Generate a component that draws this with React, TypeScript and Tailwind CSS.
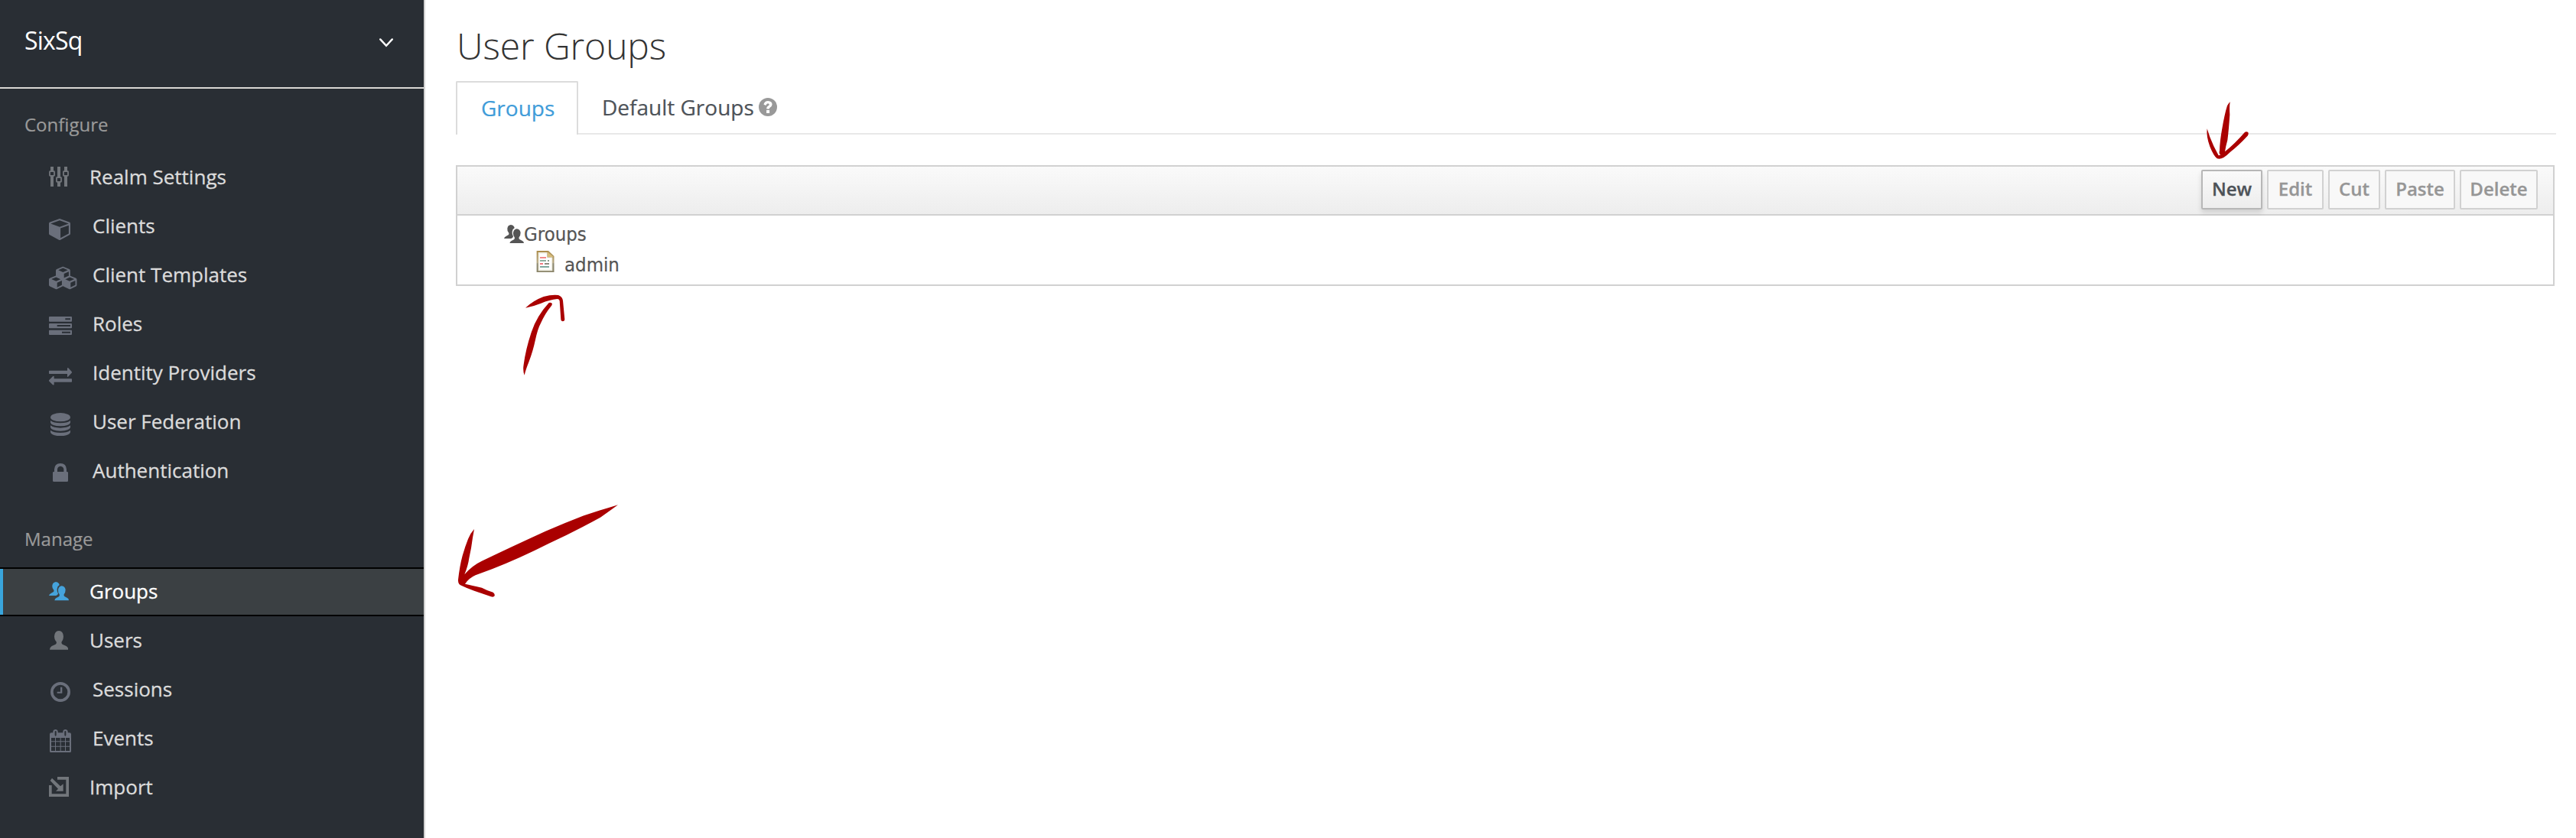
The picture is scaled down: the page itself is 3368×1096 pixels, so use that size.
import type { ReactNode } from "react";

const GRAY = "#72767b";
const SLATE = "#6a6f7b";

type IconProps = { box: string; w: number; h: number; color: string; children: ReactNode; className?: string };

function Glyph({ box, w, h, color, children, className = "" }: IconProps) {
  return (
    <svg viewBox={box} width={w} height={h} fill={color} stroke="none" className={"block shrink-0 " + className}>
      {children}
    </svg>
  );
}

const CUBE =
  "M896 1629l640-349v-636l-640 233v752zm-64-865l698-254-698-254-698 254zm832-252v768q0 35-18 65t-49 47l-704 384q-28 16-61 16t-61-16l-704-384q-31-17-49-47t-18-65v-768q0-40 23-73t61-47l704-256q22-8 44-8t44 8l704 256q38 14 61 47t23 73z";

const SlidersIcon = () => (
  <Glyph box="0 0 26 26" w={26} h={26} color={GRAY} className="mt-[18px]">
    {[
      [4, 6],
      [13, 14],
      [22, 6],
    ].map(([x, y]) => (
      <g key={x}>
        <rect x={x - 2} y="0" width="4" height={y} />
        <rect x={x - 2} y={y + 6} width="4" height={20 - y} />
        <rect x={x - 3} y={y + 0.2} width="6" height="5.6" rx="0.5" fill="none" stroke={GRAY} strokeWidth="1.8" />
      </g>
    ))}
  </Glyph>
);

const CubeIcon = () => (
  <Glyph box="0 128 1664 1664" w={28} h={28} color={SLATE} className="mt-[22px]">
    <path d={CUBE} />
  </Glyph>
);

const SmallCube = ({ x, y }: { x: number; y: number }) => (
  <g transform={`translate(${x} ${y})`}>
    <path
      fillRule="evenodd"
      d="M9.6 0.3L17.6 3.6Q18.8 4.2 18.8 5.4V12.6Q18.8 13.8 17.8 14.3L10.6 17.9Q9.6 18.3 8.6 17.9L1.2 14.3Q0 13.8 0 12.6V5.4Q0 4.2 1.2 3.6L9 0.3Q9.4 0.1 9.6 0.3ZM9.4 2.2L3.2 4.9L9.4 7.6L15.6 4.9ZM10.7 9.6V15.6L16.9 12.5V6.9Z"
    />
  </g>
);

const CubesIcon = () => (
  <Glyph box="0 0 37 31" w={37} h={31} color={SLATE} className="mt-[20px]">
    <SmallCube x={9} y={0.4} />
    <SmallCube x={0} y={12.2} />
    <SmallCube x={17.6} y={12.2} />
  </Glyph>
);

const TasksIcon = () => (
  <Glyph box="0 0 90 72" w={30} h={24} color={SLATE} className="mt-[22px]">
    <path
      fillRule="evenodd"
      d="M3 0H87Q90 0 90 3V17Q90 20 87 20H3Q0 20 0 17V3Q0 0 3 0ZM64 7V13H84V7ZM3 27H87Q90 27 90 30V43Q90 46 87 46H3Q0 46 0 43V30Q0 27 3 27ZM32 33V39H84V33ZM3 53H87Q90 53 90 56V69Q90 72 87 72H3Q0 72 0 69V56Q0 53 3 53ZM51 59V65H84V59Z"
    />
  </Glyph>
);

const ExchangeIcon = () => (
  <Glyph box="0 0 90 68" w={30} h={22.67} color={SLATE} className="mt-[25px]">
    <path d="M0 13Q0 11 2 11H72V2Q73 -1 76 1L89 15Q91 18 89 20L75 35Q72 37 72 33V24H2Q0 24 0 22Z" />
    <path d="M90 46Q90 43 88 43H20V34Q18 31 15 34L1 48Q-1 50 1 53L15 67Q19 69 20 65V56H88Q90 56 90 54Z" />
  </Glyph>
);

const DatabaseIcon = () => (
  <Glyph box="0 0 78 91" w={26} h={30.33} color={SLATE} className="ml-[2px] mt-[20px]">
    <ellipse cx="39" cy="17" rx="39" ry="17" />
    <path d="M0 30Q12 40 39 40T78 30V38Q74 51 39 52Q4 51 0 38Z" />
    <path d="M0 49Q12 59 39 59T78 49V57Q74 70 39 71Q4 70 0 57Z" />
    <path d="M0 68Q12 78 39 78T78 68V76Q74 90 39 91Q4 90 0 76Z" />
  </Glyph>
);

const LockIcon = () => (
  <Glyph box="0 0 60 72" w={20} h={24} color={SLATE} className="ml-[5px] mt-[22px]">
    <path
      fillRule="evenodd"
      d="M6 33V23Q7 1 30 0Q53 1 54 23V33H56Q60 33 60 37V68Q60 72 56 72H4Q0 72 0 68V37Q0 33 4 33ZM18 33H43V23Q42 12 30 11Q19 12 18 23Z"
    />
  </Glyph>
);

const USER = "M36 0Q53 1 54 22Q53 37 47 43Q45 50 50 53L65 60Q73 65 73 74H0Q0 65 8 60L23 53Q28 50 26 43Q19 37 18 22Q19 1 36 0Z";

const GroupIcon = ({ color }: { color: string }) => (
  <Glyph box="0 0 78 74" w={26} h={24.67} color={color}>
    <path d="M27 0Q36 0 40 8L41 13Q33 17 32 27Q31 38 36 46Q36 51 28 54H0Q1 48 9 44L18 39Q21 36 18 31Q12 25 13 14Q15 1 27 0Z" />
    <path d="M50 16Q63 17 65 31Q65 42 59 49Q57 55 62 58L72 63Q78 66 78 73H22Q23 66 29 63L39 58Q43 55 41 49Q35 42 36 31Q38 17 50 16Z" />
  </Glyph>
);

const UserIcon = () => (
  <Glyph box="0 0 73 74" w={24.3} h={24.67} color={GRAY} className="ml-px mt-[19px]">
    <path d={USER} />
  </Glyph>
);

const ClockIcon = () => (
  <Glyph box="0 0 78 78" w={26} h={26} color={SLATE} className="ml-[2px] mt-[22px]">
    <circle cx="39" cy="39" r="33.5" fill="none" stroke={SLATE} strokeWidth="11" />
    <path d="M39 20H46V44H26V38H39Z" />
  </Glyph>
);

const CalendarIcon = () => (
  <Glyph box="0 0 84 91" w={28} h={30.33} color={SLATE} className="ml-px mt-[20px]">
    <path
      fillRule="evenodd"
      d="M6 13H13V8Q14 0 23 0Q31 0 32 8V13H52V8Q53 0 61 0Q70 0 71 8V13H78Q84 13 84 19V85Q84 91 78 91H6Q0 91 0 85V19Q0 13 6 13ZM20 8V22Q20 26 23 26T26 22V8Q26 6 23 6T20 8ZM58 8V22Q58 26 61 26T64 22V8Q64 6 61 6T58 8ZM6 33V46H21V33ZM24 33V46H41V33ZM44 33V46H60V33ZM63 33V46H78V33ZM6 49V65H21V49ZM24 49V65H41V49ZM44 49V65H60V49ZM63 49V65H78V49ZM6 68V84H21V68ZM24 68V84H41V68ZM44 68V84H60V68ZM63 68V84H78V68Z"
    />
  </Glyph>
);

const ImportIcon = () => (
  <Glyph box="0 0 78 78" w={26} h={26} color={GRAY} className="mt-[18px]">
    <path d="M33 0H78V78H0V33H11V67H67V11H33Z" />
    <path d="M12 5L45 37L56 28V56H27L36 47L5 15Z" />
  </Glyph>
);

const DocIcon = () => (
  <svg viewBox="0 0 24 28" width={24} height={28} className="-mt-2 block shrink-0">
    <defs>
      <linearGradient id="doc" x1="0" y1="0" x2="0" y2="1">
        <stop offset="0" stopColor="#ac8c4a" />
        <stop offset="0.55" stopColor="#b5a680" />
        <stop offset="0.6" stopColor="#8e8b74" />
        <stop offset="1" stopColor="#8a8468" />
      </linearGradient>
    </defs>
    <path d="M0.6 0H16L23.5 7V28H0.6Z" fill="url(#doc)" />
    <path d="M2.7 2H14.5V8.5H21.3V26.2H2.7Z" fill="#f0eee2" />
    <path d="M4.4 3.8H14V9.5H19.8V24.6H4.4Z" fill="#fff" />
    <path d="M15 1.5V8H22.5Z" fill="#d8bd7c" />
    <rect x="5" y="8" width="8" height="2" fill="#f28b8b" />
    <rect x="5" y="12" width="8" height="2" fill="#8fb0a0" />
    <rect x="15" y="12" width="2" height="2" fill="#8a9a8a" />
    <rect x="5" y="16" width="4" height="2" fill="#f07a80" />
    <rect x="11" y="16" width="6" height="2" fill="#8c8c80" />
    <rect x="5" y="20" width="12" height="2" fill="#7fa79d" />
  </svg>
);

function NavItem({ icon, label, wide }: { icon: ReactNode; label: string; wide?: boolean }) {
  return (
    <li className="flex h-16 items-start pl-16 text-[26px] leading-[62px] text-[#dbdbdb] [-webkit-text-stroke:0.3px]">
      <span className={wide ? "w-[57px]" : "w-[53px]"}>{icon}</span>
      {label}
    </li>
  );
}

function ToolButton({ label, width, active }: { label: string; width: string; active?: boolean }) {
  return (
    <button
      className={
        "flex h-[52px] items-center justify-center rounded-[2px] border-2 pb-[3px] text-[24px] leading-none font-semibold [-webkit-text-stroke:0.3px] " +
        width +
        (active
          ? " border-[#b7b7b7] bg-linear-to-b from-[#fafafa] to-[#ededed] text-[#4d5258] shadow-[0_4px_6px_rgba(3,3,3,0.13)]"
          : " border-[#d1d1d1] bg-[#f8f8f8] text-[#969696]")
      }
    >
      {label}
    </button>
  );
}

export default function App() {
  return (
    <div className="relative flex h-[1096px] w-[3368px] overflow-hidden bg-white font-['Open_Sans',sans-serif]">
      <aside className="w-[556px] shrink-0 border-r-2 border-[#d1d1d1] bg-[#292e34]">
        <div className="flex h-[116px] items-center justify-between border-b-2 border-[#d9d7d4] pr-10 pb-2 pl-8 text-[32px] text-white">
          <span className="tracking-[-0.8px]">SixSq</span>
          <svg width="18" height="12" viewBox="0 0 18 12" fill="none" stroke="#fff" strokeWidth="2.4" strokeLinecap="round" className="mt-[5px]">
            <path d="M1.2 1.4L9 9.8L16.8 1.4" />
          </svg>
        </div>
        <h2 className="flex h-[84px] items-center pt-[9px] pl-8 text-[24px] text-[#9a9a9a] [-webkit-text-stroke:0.2px]">Configure</h2>
        <ul>
          <NavItem icon={<SlidersIcon />} label="Realm Settings" />
          <NavItem icon={<CubeIcon />} label="Clients" wide />
          <NavItem icon={<CubesIcon />} label="Client Templates" wide />
          <NavItem icon={<TasksIcon />} label="Roles" wide />
          <NavItem icon={<ExchangeIcon />} label="Identity Providers" wide />
          <NavItem icon={<DatabaseIcon />} label="User Federation" wide />
          <NavItem icon={<LockIcon />} label="Authentication" wide />
        </ul>
        <h2 className="flex h-[94px] items-center pt-[19px] pl-8 text-[24px] text-[#9a9a9a] [-webkit-text-stroke:0.2px]">Manage</h2>
        <ul>
          <li className="border-y-2 border-black bg-[#3b4043]">
            <div className="flex h-15 items-start border-l-4 border-[#39a5dc] pl-15 text-[26px] leading-[58px] text-white [-webkit-text-stroke:0.3px]">
              <span className="w-[53px] pt-[17px]">
                <GroupIcon color="#45a3dc" />
              </span>
              Groups
            </div>
          </li>
          <NavItem icon={<UserIcon />} label="Users" />
          <NavItem icon={<ClockIcon />} label="Sessions" wide />
          <NavItem icon={<CalendarIcon />} label="Events" wide />
          <NavItem icon={<ImportIcon />} label="Import" />
        </ul>
      </aside>

      <main className="flex-1 pr-[26px] pl-10">
        <h1 className="h-[106px] pt-5 pl-px text-[48px] leading-[80px] font-light tracking-[-0.1px] text-[#333]">User Groups</h1>
        <nav className="flex h-[70px] text-[28px] leading-[66px] [-webkit-text-stroke:0.2px]">
          <div className="w-40 rounded-t-[2px] border-2 border-b-0 border-[#dcdcdc] pl-[31px] text-[#3f9cd9]">Groups</div>
          <div className="flex flex-1 items-center border-b-2 border-[#e8e8e8] pl-[31px] text-[#4d5258]">
            Default Groups
            <svg viewBox="0 0 24 24" width="24" height="24" className="ml-[6px]">
              <circle cx="12" cy="12" r="12" fill="#999" />
              <path d="M6.4 8.4Q8 4 12.2 4Q17.4 4.3 17.6 8.6Q17.4 11.2 15 12.5Q13.8 13.2 13.8 14.6H10.2Q10 11.6 12.2 10.6Q13.8 9.8 13.8 8.8Q13.6 7.4 12 7.3Q10.4 7.4 9.2 9.9Z" fill="#fff" />
              <rect x="10.1" y="16" width="4" height="4" fill="#fff" />
            </svg>
          </div>
        </nav>

        <section className="mt-10 mr-[2px] h-[158px] border-2 border-[#d1d1d1]">
          <div className="flex h-16 items-start justify-end gap-[6px] border-b-2 border-[#d1d1d1] bg-linear-to-b from-[#fafafa] to-[#ededed] pt-1 pr-5">
            <ToolButton label="New" width="w-20" active />
            <ToolButton label="Edit" width="w-[74px]" />
            <ToolButton label="Cut" width="w-[68px]" />
            <ToolButton label="Paste" width="w-[92px]" />
            <ToolButton label="Delete" width="w-[102px]" />
          </div>
          <div className="pt-1 pl-[61px] font-['DejaVu_Sans_Condensed','DejaVu_Sans',sans-serif] text-[25.5px] leading-10 text-[#555] [-webkit-text-stroke:0.2px]">
            <div className="flex h-10 items-center">
              <GroupIcon color="#555" />
              <span>Groups</span>
            </div>
            <div className="flex h-10 items-center pl-[42px]">
              <DocIcon />
              <span className="ml-[13px]">admin</span>
            </div>
          </div>
        </section>
      </main>

      <svg className="absolute top-[384px] left-[684px]" width="56" height="108" viewBox="312 552 168 324" fill="#a00">
        <path d="M321 608Q350 580 392 564Q425 555 450 558Q466 564 468 580L475 654Q474 661 467 661Q460 660 460 654L455 580Q453 573 446 573Q415 576 382 590Q350 603 321 608Z" />
        <path d="M413 588Q420 585 425 590Q427 597 421 602Q398 630 381 668Q369 690 360 733Q350 780 335 818Q322 850 317 872Q310 855 314 830Q322 770 344 704Q365 640 413 588Z" />
      </svg>
      <svg className="absolute top-[656px] left-[596px]" width="216" height="128" viewBox="48 48 648 384" fill="#a00">
        <path d="M120 156Q118 168 114 190L108 230L100 270Q96 300 82 334Q110 300 150 281Q260 228 400 164Q480 130 555 101L610 83Q650 72 684 61Q650 86 615 110Q520 162 410 214Q300 270 190 313L125 337Q100 348 84 371Q110 377 150 386Q170 397 194 404Q202 410 200 418Q196 424 186 421Q150 408 120 398Q90 388 66 376Q56 370 57 355Q63 300 74 260Q84 225 96 195Q105 172 120 156Z" />
      </svg>
      <svg className="absolute top-[130px] left-[2882px]" width="60" height="80" viewBox="96 60 180 240" fill="#a00">
        <path d="M197 70Q194 90 196 120Q192 180 187 220Q180 245 177 265Q215 235 254 190Q260 184 268 189Q271 195 267 202Q230 242 200 265Q185 280 172 288Q158 296 146 292Q132 280 118 245Q103 205 107 175Q112 190 118 208Q132 245 152 280L160 278Q152 272 156 260Q157 225 165 180Q175 120 186 85Q191 75 197 70Z" />
      </svg>
    </div>
  );
}
